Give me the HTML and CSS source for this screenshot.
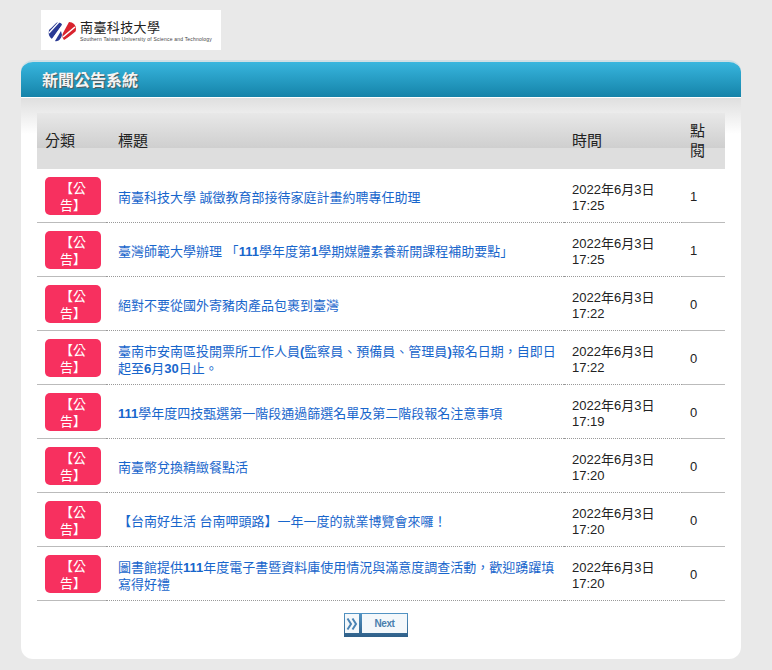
FILE: index.html
```html
<!DOCTYPE html>
<html lang="zh-Hant">
<head>
    <meta charset="UTF-8">
    <meta name="viewport" content="width=device-width, initial-scale=1.0">
    <title>新聞公告系統</title>
    <link rel="stylesheet" href="styles.css">
</head>
<body>
    <header class="site-header">
        <div class="logo">
            <svg class="logo-mark" width="28" height="20" viewBox="0 0 28 20">
                <path d="M8 1 C11 0 14 1 14 3 L4 17 C1 15 0 12 1 8 Z" fill="#2a3a94"/>
                <path d="M2 6 L8 0 M1 11 L11 0" stroke="#fff" stroke-width="1.3" fill="none"/>
                <path d="M4 17 L14 3 L15 5 L7 19 Z" fill="#fff"/>
                <path d="M7 19 L13 9 L14 13 C13 17 10 20 7 19 Z" fill="#2a3a94"/>
                <path d="M21 0 C25 0 28 3 28 7 C28 9 27 11 26 12 L16 18 C14 16 14 13 15 11 Z" fill="#d9232e"/>
                <path d="M15 15 L27 5 M18 18 L28 10" stroke="#fff" stroke-width="1.6" fill="none"/>
            </svg>
            <div class="logo-text">
                <div class="logo-zh">南臺科技大學</div>
                <div class="logo-en">Southern Taiwan University of Science and Technology</div>
            </div>
        </div>
    </header>
    <main class="panel">
        <h1 class="panel-title">新聞公告系統</h1>
        <div class="panel-body">
            <table class="news-table">
                <thead>
                    <tr>
                        <th class="col-type">分類</th>
                        <th class="col-title">標題</th>
                        <th class="col-time">時間</th>
                        <th class="col-hits">點閱</th>
                    </tr>
                </thead>
                <tbody>
                    <tr>
                        <td class="col-type"><span class="badge">【公告】</span></td>
                        <td class="col-title"><a href="#">南臺科技大學 誠徵教育部接待家庭計畫約聘專任助理</a></td>
                        <td class="col-time">2022年6月3日<br>17:25</td>
                        <td class="col-hits">1</td>
                    </tr>
                    <tr>
                        <td class="col-type"><span class="badge">【公告】</span></td>
                        <td class="col-title"><a href="#">臺灣師範大學辦理 「<b>111</b>學年度第<b>1</b>學期媒體素養新開課程補助要點」</a></td>
                        <td class="col-time">2022年6月3日<br>17:25</td>
                        <td class="col-hits">1</td>
                    </tr>
                    <tr>
                        <td class="col-type"><span class="badge">【公告】</span></td>
                        <td class="col-title"><a href="#">絕對不要從國外寄豬肉產品包裹到臺灣</a></td>
                        <td class="col-time">2022年6月3日<br>17:22</td>
                        <td class="col-hits">0</td>
                    </tr>
                    <tr>
                        <td class="col-type"><span class="badge">【公告】</span></td>
                        <td class="col-title"><a href="#">臺南市安南區投開票所工作人員<b>(</b>監察員、預備員、管理員<b>)</b>報名日期，自即日<br>起至<b>6</b>月<b>30</b>日止。</a></td>
                        <td class="col-time">2022年6月3日<br>17:22</td>
                        <td class="col-hits">0</td>
                    </tr>
                    <tr>
                        <td class="col-type"><span class="badge">【公告】</span></td>
                        <td class="col-title"><a href="#"><b>111</b>學年度四技甄選第一階段通過篩選名單及第二階段報名注意事項</a></td>
                        <td class="col-time">2022年6月3日<br>17:19</td>
                        <td class="col-hits">0</td>
                    </tr>
                    <tr>
                        <td class="col-type"><span class="badge">【公告】</span></td>
                        <td class="col-title"><a href="#">南臺幣兌換精緻餐點活</a></td>
                        <td class="col-time">2022年6月3日<br>17:20</td>
                        <td class="col-hits">0</td>
                    </tr>
                    <tr>
                        <td class="col-type"><span class="badge">【公告】</span></td>
                        <td class="col-title"><a href="#">【台南好生活 台南呷頭路】一年一度的就業博覽會來囉！</a></td>
                        <td class="col-time">2022年6月3日<br>17:20</td>
                        <td class="col-hits">0</td>
                    </tr>
                    <tr>
                        <td class="col-type"><span class="badge">【公告】</span></td>
                        <td class="col-title"><a href="#">圖書館提供<b>111</b>年度電子書暨資料庫使用情況與滿意度調查活動，歡迎踴躍填<br>寫得好禮</a></td>
                        <td class="col-time">2022年6月3日<br>17:20</td>
                        <td class="col-hits">0</td>
                    </tr>
                </tbody>
            </table>
            <nav class="pager">
                <a class="pager-btn" href="#">
                    <span class="pager-icon">
                        <svg width="12" height="14" viewBox="0 0 12 14">
                            <path d="M1.5 1.5 L5 7 L1.5 12.5 M6.5 1.5 L10 7 L6.5 12.5" stroke="#4a83b4" stroke-width="2" fill="none"/>
                        </svg>
                    </span>
                    <span class="pager-label">Next</span>
                </a>
            </nav>
        </div>
    </main>
</body>
</html>
```

FILE: styles.css
```css
body {
    margin: 0;
    background-color: #e9e9e9;
    font-family: "Liberation Sans", "Noto Sans CJK TC", sans-serif;
    color: #222;
}
.site-header {
    height: 60px;
    padding: 10px 0 0 41px;
    box-sizing: border-box;
}
.logo {
    width: 180px;
    height: 40px;
    background-color: #fff;
    display: flex;
    align-items: center;
    gap: 4px;
    padding-left: 7px;
    box-sizing: border-box;
}
.logo-mark {
    margin-top: 4px;
}
.logo-text {
    padding-top: 2px;
}
.logo-zh {
    font-size: 13px;
    line-height: 17px;
    letter-spacing: 0.4px;
    color: #222;
}
.logo-en {
    font-size: 5px;
    line-height: 7px;
    color: #444;
    white-space: nowrap;
    letter-spacing: 0.2px;
}
.panel {
    width: 720px;
    margin-left: 21px;
}
.panel-title {
    margin: 0;
    height: 37px;
    padding-left: 21px;
    box-sizing: border-box;
    line-height: 38px;
    font-size: 16px;
    font-weight: bold;
    color: #f4f4f4;
    text-shadow: 1px 1px 1px #555;
    background: linear-gradient(to bottom, #38b6de, #1583a9);
    border-top: 2px solid #cfdfe5;
    border-radius: 12px 12px 0 0;
}
.panel-body {
    height: 562px;
    box-sizing: border-box;
    padding: 15px 16px 0;
    background: linear-gradient(to bottom, #dfdfdf 0, #fff 36px);
    border-radius: 0 0 12px 12px;
    border-top: 1px solid #fff;
}
.news-table {
    width: 688px;
    border-collapse: separate;
    border-spacing: 0;
    table-layout: fixed;
    font-size: 13px;
}
.news-table th {
    height: 56px;
    padding: 0 8px;
    font-size: 15px;
    font-weight: normal;
    line-height: 20px;
    text-align: left;
    background: linear-gradient(to bottom, #e8e8e8 0, #cfcfcf 62%, #dedede 63%, #dedede 100%);
}
.news-table td {
    height: 54px;
    box-sizing: border-box;
    padding: 0 8px;
    line-height: 16px;
    border-bottom: 1px dotted #999;
}
.news-table td.col-title,
.news-table td.col-time {
    padding-top: 4px;
}
.news-table td.col-type,
.news-table td.col-hits {
    border-bottom: 1px solid #bbb;
}
.news-table td.col-hits {
    padding-top: 2px;
}
.news-table th.col-type,
.news-table td.col-type {
    width: 61px;
    padding-right: 0;
}
.news-table th.col-title,
.news-table td.col-title {
    padding-left: 12px;
}
.col-time {
    width: 102px;
}
.col-hits {
    width: 27px;
}
.col-title a {
    color: #1866cc;
    text-decoration: none;
    line-height: 17px;
    display: block;
}
.badge {
    display: block;
    width: 56px;
    height: 38px;
    box-sizing: border-box;
    padding: 3px 10px 0;
    text-align: center;
    line-height: 17px;
    color: #fff;
    background-color: #f7305f;
    border-radius: 5px;
}
.pager {
    display: flex;
    justify-content: center;
    padding-right: 10px;
    margin-top: 12px;
}
.pager-btn {
    display: flex;
    gap: 3px;
    width: 64px;
    height: 24px;
    box-sizing: border-box;
    padding: 1px 1px 4px 1px;
    background: linear-gradient(to bottom, #5394c4, #2f5f88);
    text-decoration: none;
}
.pager-icon {
    width: 14px;
    background-color: #f4f8fb;
    display: flex;
    align-items: center;
    justify-content: center;
}
.pager-label {
    flex: 1;
    background-color: #f4f8fb;
    color: #4a7fae;
    font-size: 10px;
    font-weight: bold;
    letter-spacing: -0.4px;
    text-align: center;
    line-height: 20px;
}
```
